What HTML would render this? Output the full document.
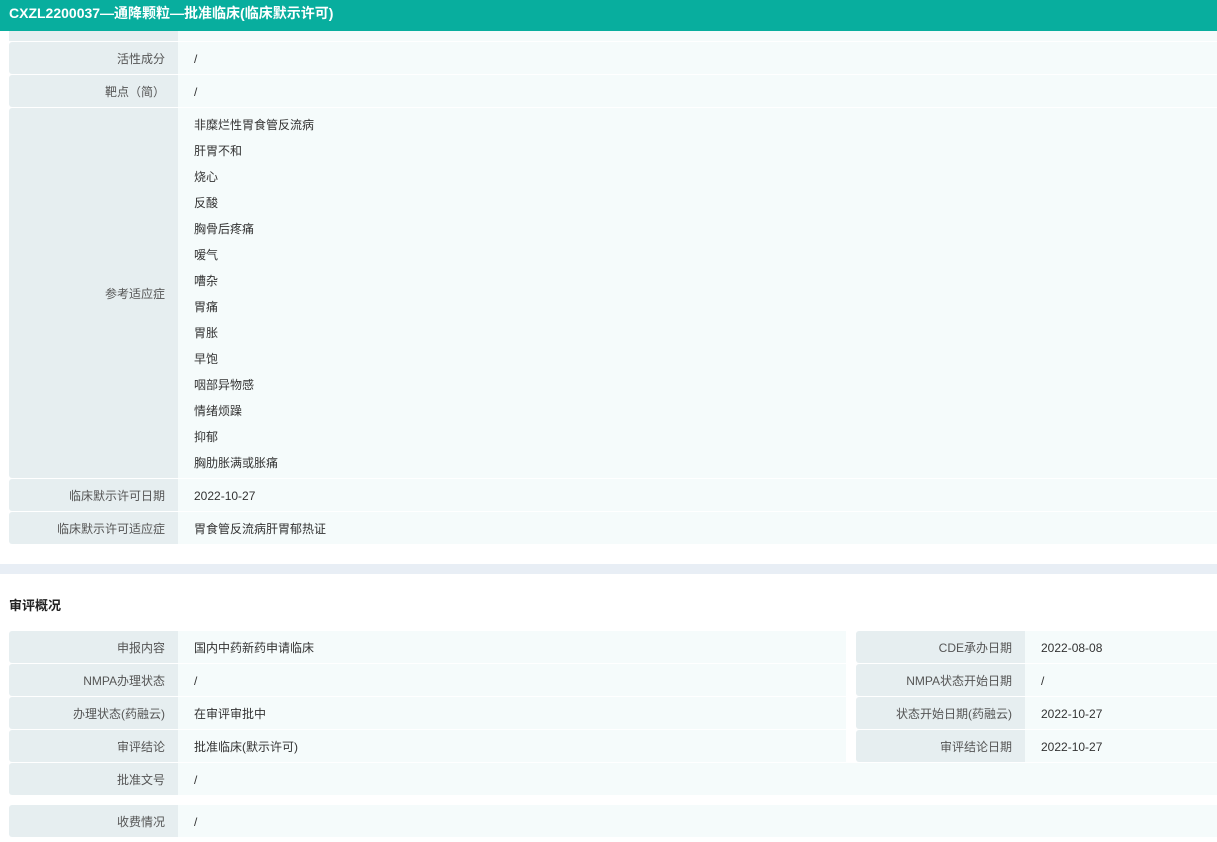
<!DOCTYPE html>
<html><head><meta charset="utf-8"><style>
*{margin:0;padding:0;box-sizing:border-box}
body{width:1217px;height:842px;overflow:hidden;background:#fff;font-family:"Liberation Sans","Noto Sans CJK SC",sans-serif;font-size:12px;color:#333;position:relative}
.hd{position:absolute;left:0;top:0;width:1217px;height:31px;background:#08ae9e;color:#fff;font-weight:bold;font-size:14px;line-height:27px;padding-left:9px}
.r{position:absolute;left:9px;display:flex}
.l{width:169px;background:#e6eef0;border-radius:3px 0 0 3px;color:#555;text-align:right;padding-right:13px;padding-top:1px;display:flex;align-items:center;justify-content:flex-end}
.v{background:#f5fbfb;padding-left:16px;padding-top:1px;display:flex;align-items:center;color:#333}
.list div{height:26px;line-height:26px}
</style></head><body>
<div class="hd">CXZL2200037—通降颗粒—批准临床(临床默示许可)</div>
<div class="r" style="top:31px;height:10px;width:1208px"><div class="l" style="border-radius:0"></div><div class="v" style="flex:1"></div></div>
<div class="r" style="top:42px;height:32px;width:1208px"><div class="l">活性成分</div><div class="v" style="flex:1">/</div></div>
<div class="r" style="top:75px;height:32px;width:1208px"><div class="l">靶点（简）</div><div class="v" style="flex:1">/</div></div>
<div class="r" style="top:108px;height:370px;width:1208px"><div class="l">参考适应症</div><div class="v list" style="flex:1;display:block;padding-top:4px">
<div>非糜烂性胃食管反流病</div><div>肝胃不和</div><div>烧心</div><div>反酸</div><div>胸骨后疼痛</div><div>嗳气</div><div>嘈杂</div><div>胃痛</div><div>胃胀</div><div>早饱</div><div>咽部异物感</div><div>情绪烦躁</div><div>抑郁</div><div>胸肋胀满或胀痛</div></div></div>
<div class="r" style="top:479px;height:32px;width:1208px"><div class="l">临床默示许可日期</div><div class="v" style="flex:1">2022-10-27</div></div>
<div class="r" style="top:512px;height:32px;width:1208px"><div class="l">临床默示许可适应症</div><div class="v" style="flex:1">胃食管反流病肝胃郁热证</div></div>
<div style="position:absolute;left:0;top:564px;width:1217px;height:10px;background:#e8eef5"></div>
<div style="position:absolute;left:9px;top:595px;font-weight:bold;font-size:13px;color:#222">审评概况</div>
<div class="r" style="top:631px;height:32px;width:837px"><div class="l">申报内容</div><div class="v" style="flex:1">国内中药新药申请临床</div></div>
<div class="r" style="top:664px;height:32px;width:837px"><div class="l">NMPA办理状态</div><div class="v" style="flex:1">/</div></div>
<div class="r" style="top:697px;height:32px;width:837px"><div class="l">办理状态(药融云)</div><div class="v" style="flex:1">在审评审批中</div></div>
<div class="r" style="top:730px;height:32px;width:837px"><div class="l">审评结论</div><div class="v" style="flex:1">批准临床(默示许可)</div></div>
<div class="r" style="top:631px;left:856px;height:32px;width:361px"><div class="l">CDE承办日期</div><div class="v" style="flex:1">2022-08-08</div></div>
<div class="r" style="top:664px;left:856px;height:32px;width:361px"><div class="l">NMPA状态开始日期</div><div class="v" style="flex:1">/</div></div>
<div class="r" style="top:697px;left:856px;height:32px;width:361px"><div class="l">状态开始日期(药融云)</div><div class="v" style="flex:1">2022-10-27</div></div>
<div class="r" style="top:730px;left:856px;height:32px;width:361px"><div class="l">审评结论日期</div><div class="v" style="flex:1">2022-10-27</div></div>
<div class="r" style="top:763px;height:32px;width:1208px"><div class="l">批准文号</div><div class="v" style="flex:1">/</div></div>
<div class="r" style="top:805px;height:32px;width:1208px"><div class="l">收费情况</div><div class="v" style="flex:1">/</div></div>
</body></html>
